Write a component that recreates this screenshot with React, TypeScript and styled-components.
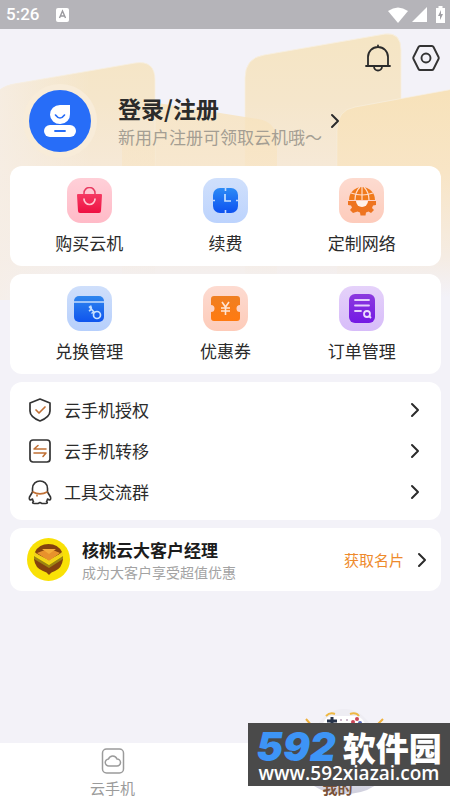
import React from 'react';
import styled, { createGlobalStyle } from 'styled-components';

const GlobalStyle = createGlobalStyle`
  * { box-sizing: border-box; }
  body {
    margin: 0;
    background: #f3f2f8;
    color: #2b2b2b;
    font-family: 'Noto Sans CJK SC', 'Noto Sans', sans-serif;
  }
  button {
    border: 0;
    padding: 0;
    background: none;
    color: inherit;
    font: inherit;
    cursor: pointer;
  }
  svg { display: block; flex: none; }
`;

const Page = styled.div`
  position: relative;
  isolation: isolate;
  display: flex;
  flex-direction: column;
  min-height: 100vh;
  overflow: hidden;
`;

const Backdrop = styled.svg`
  position: absolute;
  z-index: -1;
  top: 0;
  left: 0;
  width: 100%;
`;

const StatusBar = styled.header`
  display: flex;
  align-items: center;
  height: 29px;
  padding: 0 5px 0 6px;
  background: #b5b4b9;
  color: #fff;
`;

const Clock = styled.time`
  margin-right: 17px;
  font: 500 17px/29px Roboto, sans-serif;
`;

const StatusIcons = styled.div`
  display: flex;
  align-items: center;
  gap: 4px;
  margin-left: auto;
`;

const TopBar = styled.div`
  display: flex;
  justify-content: flex-end;
  gap: 18px;
  height: 55px;
  padding: 14px 9px 0;
`;

const IconButton = styled.button`
  display: grid;
  place-items: center;
  width: 30px;
  height: 30px;
`;

const Profile = styled.button`
  display: flex;
  align-items: center;
  align-self: flex-start;
  margin: 0 23px 8px;
  text-align: left;
`;

const Avatar = styled.span`
  display: grid;
  place-items: center;
  width: 74px;
  height: 74px;
  margin-right: 21px;
  border-radius: 50%;
  background: #f8ecd9;
`;

const ProfileText = styled.span`
  display: flex;
  flex-direction: column;
  margin-right: 8px;
`;

const ProfileName = styled.strong`
  font-size: 23px;
  line-height: 32px;
  font-weight: 700;
`;

const ProfileHint = styled.span`
  color: #a49e93;
  font-size: 17px;
  line-height: 26px;
`;

const Main = styled.main`
  display: flex;
  flex: 1;
  flex-direction: column;
  gap: 8px;
  padding: 0 9px 16px 10px;
`;

const Card = styled.section`
  border-radius: 12px;
  background: #fff;
`;

const TileCard = styled(Card)`
  display: grid;
  grid-template-columns: repeat(3, 1fr);
  padding: 12px 11px 11px;
`;

const Tile = styled.button`
  display: flex;
  flex-direction: column;
  align-items: center;
  gap: 8px;
  font-size: 17px;
  line-height: 24px;
`;

const TileIcon = styled.span<{ $from: string; $to: string }>`
  display: grid;
  place-items: center;
  width: 45px;
  height: 45px;
  border-radius: 14px;
  background: linear-gradient(${p => p.$from}, ${p => p.$to});
`;

const ListCard = styled(Card)`
  display: flex;
  flex-direction: column;
  padding: 7px 0 8px;
`;

const ListRow = styled.button`
  display: flex;
  align-items: center;
  gap: 12px;
  height: 41px;
  padding: 0 21px 0 18px;
  font-size: 17px;
  text-align: left;
`;

const RowLabel = styled.span`
  flex: 1;
`;

const ManagerCard = styled(Card)`
  display: flex;
  align-items: center;
  height: 63px;
  padding: 0 14px 0 17px;
`;

const ManagerText = styled.div`
  display: flex;
  flex: 1;
  flex-direction: column;
  margin-left: 12px;
`;

const ManagerName = styled.h2`
  margin: 0;
  color: #1c1c1c;
  font-size: 17px;
  line-height: 24px;
  font-weight: 700;
`;

const ManagerHint = styled.p`
  margin: 0;
  color: #a3a3a3;
  font-size: 14px;
  line-height: 20px;
`;

const CardLink = styled.a`
  display: flex;
  align-items: center;
  gap: 13px;
  color: #ee8a2c;
  font-size: 15px;
  text-decoration: none;
`;

const TabBar = styled.nav`
  display: grid;
  grid-template-columns: repeat(2, 1fr);
  height: 57px;
  background: #fff;
`;

const Tab = styled.button<{ $active?: boolean }>`
  position: relative;
  display: flex;
  flex-direction: column;
  align-items: center;
  justify-content: flex-end;
  gap: 3px;
  padding-bottom: 1px;
  color: ${p => (p.$active ? '#7a5238' : '#9b9b9b')};
  font-size: 15px;
  font-weight: ${p => (p.$active ? 700 : 400)};
  line-height: 22px;
`;

const TabLabel = styled.span`
  position: relative;
`;

const Mascot = styled.svg`
  position: absolute;
  bottom: 4px;
  left: 50%;
  margin-left: -42px;
`;

const Watermark = styled.aside`
  position: absolute;
  right: 0;
  bottom: 14px;
  display: flex;
  flex-direction: column;
  align-items: center;
  width: 202px;
  height: 63px;
  background: #4a4a4a;
  color: #fff;
`;

const WatermarkTitle = styled.div`
  display: flex;
  align-items: center;
  gap: 7px;
  height: 41px;
  padding-top: 7px;
`;

const WatermarkNumber = styled.span`
  color: #3d94f6;
  font: italic 900 40px/34px Inter, sans-serif;
`;

const WatermarkName = styled.span`
  font-size: 33px;
  line-height: 34px;
  font-weight: 900;
`;

const WatermarkSite = styled.span`
  font: 600 19px/18px 'Open Sans', sans-serif;
`;

const Chevron = () => (
  <svg width="10" height="16" viewBox="0 0 10 16" fill="none" stroke="#2b2b2b" strokeWidth="2" strokeLinecap="round" strokeLinejoin="round">
    <path d="M2 2l6 6-6 6" />
  </svg>
);

const PageBackdrop = () => (
  <Backdrop viewBox="0 0 450 300" aria-hidden="true">
    <defs>
      <linearGradient id="pale" gradientUnits="userSpaceOnUse" x1="0" y1="35" x2="0" y2="298">
        <stop offset="0" stopColor="#f5e5c4" />
        <stop offset="0.25" stopColor="#f5e6cb" />
        <stop offset="0.5" stopColor="#f6e9d7" />
        <stop offset="0.85" stopColor="#f4ede9" />
        <stop offset="1" stopColor="#f3f2f8" />
      </linearGradient>
      <linearGradient id="warm" gradientUnits="userSpaceOnUse" x1="0" y1="90" x2="0" y2="298">
        <stop offset="0" stopColor="#f7e2ba" />
        <stop offset="0.4" stopColor="#f8e5c6" />
        <stop offset="0.8" stopColor="#f5ece3" />
        <stop offset="1" stopColor="#f3f2f8" />
      </linearGradient>
      <linearGradient id="left" x1="0" x2="1">
        <stop offset="0" stopColor="#f6eee6" stopOpacity="0.8" />
        <stop offset="1" stopColor="#f6eee6" stopOpacity="0" />
      </linearGradient>
      <linearGradient id="rim" gradientUnits="userSpaceOnUse" x1="0" y1="35" x2="0" y2="240">
        <stop offset="0" stopColor="#f7efe0" />
        <stop offset="1" stopColor="#f7efe0" stopOpacity="0" />
      </linearGradient>
    </defs>
    <path d="M245 310V78Q245 58 264 55L385 34Q401 32 401 50V310Z" fill="url(#pale)" stroke="url(#rim)" />
    <path d="M122 310V117Q122 98 145 101L258 119Q277 122 277 142V310Z" fill="url(#warm)" opacity="0.8" />
    <path d="M337 310V130Q337 110 355 107L470 86V310Z" fill="url(#warm)" stroke="url(#rim)" />
    <path d="M-10 310V100Q0 86 14 84L135 63Q155 60 155 80V310Z" fill="url(#pale)" stroke="url(#rim)" />
    <path d="M122 310V140H155V310Z" fill="url(#warm)" opacity="0.6" />
    <path d="M0 90Q6 85 14 84L90 71V310H0Z" fill="url(#left)" />
  </Backdrop>
);

const BagIcon = () => (
  <svg width="27" height="27" viewBox="0 0 27 27" fill="none">
    <defs><linearGradient id="bag" x2="0" y2="1"><stop stopColor="#f53a62" /><stop offset="1" stopColor="#ee1042" /></linearGradient></defs>
    <path d="M8 9V6a5 5 0 0 1 11 0v3" stroke="#e83a60" strokeWidth="1.5" />
    <path d="M2 7h23q1 0 1 1l-1 16q0 2-2 2H4q-2 0-2-2L1 8q0-1 1-1z" fill="url(#bag)" />
    <path d="M8 12a5.5 5.5 0 0 0 11 0" stroke="#ffc7d2" strokeWidth="1.7" strokeLinecap="round" />
  </svg>
);

const ClockIcon = () => (
  <svg width="27" height="27" viewBox="0 0 27 27" fill="none">
    <defs><linearGradient id="clk" x2="0" y2="1"><stop stopColor="#2c8bf6" /><stop offset="1" stopColor="#0d51f0" /></linearGradient></defs>
    <rect x="1" y="1" width="25" height="25" rx="7" fill="url(#clk)" />
    <path d="M13.5 0v4M13.5 23v4M0 13.5h3M24 13.5h3" stroke="#c6dafd" strokeWidth="1.6" />
    <path d="M13 7v7h6" stroke="#c6e0ff" strokeWidth="1.7" />
  </svg>
);

const GlobeIcon = () => (
  <svg width="30" height="30" viewBox="0 0 30 30" fill="none">
    <path d="M2 14A13 13 0 0 1 28 14Z" fill="#f07a1b" />
    <path d="M15 1v13M8 14Q8 6 13 1M22 14Q22 6 17 1M4 7q11 4 22 0" stroke="#ffdccb" strokeWidth="1.2" />
    <path d="M1 15h28v4l-3 .5-1 2.500 2 2-3 3-2.500-1.500-2.500 1-.5 3h-5l-.5-3-2.500-1L6 27l-3-3 2-2.500-1-2L1 19z" fill="#ee7420" />
    <path d="M9 15h12a6 6 0 0 1-12 0z" fill="#fff1e9" />
  </svg>
);

const KeyCardIcon = () => (
  <svg width="30" height="27" viewBox="0 0 30 27" fill="none">
    <defs><linearGradient id="keyc" x2="0" y2="1"><stop stopColor="#2f86ee" /><stop offset="1" stopColor="#0f54ee" /></linearGradient></defs>
    <rect y="1" width="30" height="26" rx="5" fill="url(#keyc)" />
    <path d="M0 7h30" stroke="#c6dcfb" strokeWidth="1.5" />
    <circle cx="23" cy="20" r="3.5" stroke="#c9e2ff" strokeWidth="1.7" />
    <path d="M20.5 17.5L15 11.500M15 16l3-2M17.500 18.500l2.500-2M16.500 10.500l1 3" stroke="#c9e2ff" strokeWidth="1.6" />
  </svg>
);

const CouponIcon = () => (
  <svg width="31" height="25" viewBox="0 0 31 25" fill="none">
    <defs><linearGradient id="cpn" x2="0" y2="1"><stop stopColor="#ef7f22" /><stop offset="1" stopColor="#ff7a10" /></linearGradient></defs>
    <path d="M4 0h23q3 0 3 3v6a3.500 3.500 0 0 0 0 7v6q0 3-3 3H4q-3 0-3-3v-6a3.500 3.500 0 0 0 0-7V3q0-3 3-3z" fill="url(#cpn)" />
    <path d="M12 6l3.500 5L19 6M15.500 11v8M11 12h9M11 15h9" stroke="#ffe5d4" strokeWidth="1.6" />
  </svg>
);

const OrderIcon = () => (
  <svg width="26" height="29" viewBox="0 0 26 29" fill="none">
    <defs><linearGradient id="ord" x2="0" y2="1"><stop stopColor="#8b3ade" /><stop offset="1" stopColor="#7418e4" /></linearGradient></defs>
    <rect width="26" height="29" rx="6" fill="url(#ord)" />
    <path d="M6 6h14M6 11.500h14M6 17h6" stroke="#e5cffc" strokeWidth="1.8" strokeLinecap="round" />
    <circle cx="18" cy="20" r="3" stroke="#ecdcff" strokeWidth="1.8" />
    <path d="M20 22l2 2" stroke="#ecdcff" strokeWidth="1.8" />
  </svg>
);

const ShieldIcon = () => (
  <svg width="24" height="26" viewBox="0 0 24 26" fill="none" strokeLinecap="round" strokeLinejoin="round">
    <path d="M12 2l10 4v8c0 5-5 8-10 10C7 22 2 19 2 14V6z" stroke="#333" strokeWidth="1.7" />
    <path d="M8 13l3 3 6-6" stroke="#c07035" strokeWidth="1.7" />
  </svg>
);

const TransferIcon = () => (
  <svg width="24" height="26" viewBox="0 0 24 26" fill="none" strokeLinecap="round" strokeLinejoin="round">
    <rect x="2" y="2" width="20" height="22" rx="3" stroke="#333" strokeWidth="1.7" />
    <path d="M18 11H6l4-3.500M6 15h12l-3 3.500" stroke="#c07035" strokeWidth="1.6" />
  </svg>
);

const PenguinIcon = () => (
  <svg width="24" height="26" viewBox="0 0 24 26" fill="none" strokeLinecap="round" strokeLinejoin="round">
    <path d="M4.500 13V9.500c0-10 15-10 15 0V13l3 5c.5 2 0 3-1 3l-2-1c0 1-.5 1.500-1 2.500 1.500 1 1 2-1 2h-3.500l-2-1-2 1H6.500c-2 0-2.500-1-1-2-.5-1-1-1.500-1-2.500l-2 1c-1 0-1.500-1-1-3z" stroke="#333" strokeWidth="1.6" />
    <path d="M5 13c4 2.500 10 2.500 14 0M9 14.500V17" stroke="#c07035" strokeWidth="1.6" />
  </svg>
);

const WalnutLogo = () => (
  <svg width="43" height="43" viewBox="0 0 43 43">
    <circle cx="21.5" cy="21.5" r="21.5" fill="#f9e106" />
    <path d="M8 14Q12 6 21.500 6T35 14L33 16 22 22 9 16z" fill="#84420f" />
    <path d="M10 15l8-3h8l7 3-11 8z" fill="#e8922c" />
    <path d="M15 11h14l-7 5z" fill="#f4ad3a" />
    <path d="M7 18l15 9 14-9v4l-14 9-15-9z" fill="#9c8413" />
    <path d="M7 14l15 9 14-9v3l-14 9-15-9z" fill="#f0d11c" />
    <path d="M7 21l15 9 14-9q-1 9-8 12-4 1-6 4-2-3-6-4-8-3-9-12z" fill="#84420f" />
  </svg>
);

const tiles = [
  [
    { label: '购买云机', from: '#ffd0d8', to: '#ffbac7', icon: <BagIcon /> },
    { label: '续费', from: '#d0e0fc', to: '#bcd3fd', icon: <ClockIcon /> },
    { label: '定制网络', from: '#fddbd0', to: '#fdcbbb', icon: <GlobeIcon /> },
  ],
  [
    { label: '兑换管理', from: '#cfdffb', to: '#b6cffc', icon: <KeyCardIcon /> },
    { label: '优惠券', from: '#fddbd1', to: '#fdcbb9', icon: <CouponIcon /> },
    { label: '订单管理', from: '#e5d2fa', to: '#d7bcf9', icon: <OrderIcon /> },
  ],
];

const rows = [
  { label: '云手机授权', icon: <ShieldIcon /> },
  { label: '云手机转移', icon: <TransferIcon /> },
  { label: '工具交流群', icon: <PenguinIcon /> },
];

export default function App() {
  return (
    <Page>
      <GlobalStyle />
      <PageBackdrop />
      <StatusBar>
        <Clock>5:26</Clock>
        <svg width="13" height="14" viewBox="0 0 13 14" fill="none">
          <rect width="13" height="14" rx="2" fill="#fff" />
          <path d="M3.500 10L6.500 3l3 7M4.500 8h4" stroke="#9b9a9f" strokeWidth="1.4" />
        </svg>
        <StatusIcons>
          <svg width="20" height="16" viewBox="0 0 20 16"><path d="M0 4Q10-3 20 4L10 16z" fill="#fff" /></svg>
          <svg width="15" height="15" viewBox="0 0 15 15"><path d="M15 0v15H0z" fill="#fff" /></svg>
          <svg width="14" height="17" viewBox="4 0 14 17">
            <path d="M9 2h2.500V0h4v2H18v15H9z" fill="#fff" />
            <path d="M14 4l-3 6h2v4l3-6h-2z" fill="#a09fa4" />
          </svg>
        </StatusIcons>
      </StatusBar>
      <TopBar>
        <IconButton aria-label="消息">
          <svg width="28" height="28" viewBox="0 0 28 28" fill="none" stroke="#2b2b2b" strokeWidth="1.8" strokeLinecap="round">
            <path d="M4 22V13a10 10 0 0 1 20 0v9M2 22h24M14 1.500V3M10 22.500a4 4 0 0 0 8 0" />
          </svg>
        </IconButton>
        <IconButton aria-label="设置">
          <svg width="28" height="28" viewBox="0 0 28 28" fill="none" stroke="#333" strokeWidth="1.9" strokeLinejoin="round">
            <path d="M8 2h12q1 0 1.500 1l5 10q.5 1 0 2l-5 10q-.5 1-1.500 1H8q-1 0-1.500-1l-5-10q-.5-1 0-2l5-10Q7 2 8 2z" />
            <circle cx="14" cy="14" r="4.5" />
          </svg>
        </IconButton>
      </TopBar>
      <Profile>
        <Avatar>
          <svg width="62" height="62" viewBox="0 0 62 62" fill="none">
            <circle cx="31" cy="31" r="31" fill="#276df8" />
            <path d="M31 15h10v9a10 9.500 0 1 1-10-9z" fill="#fff" />
            <path d="M26.500 25q4.500 6 9 0" stroke="#276df8" strokeWidth="1.6" strokeLinecap="round" />
            <rect x="15" y="35" width="32" height="12" rx="6" fill="#fff" />
            <path d="M26 41h10" stroke="#276df8" strokeWidth="1.8" strokeLinecap="round" />
          </svg>
        </Avatar>
        <ProfileText>
          <ProfileName>登录/注册</ProfileName>
          <ProfileHint>新用户注册可领取云机哦～</ProfileHint>
        </ProfileText>
        <Chevron />
      </Profile>
      <Main>
        {tiles.map((group, i) => (
          <TileCard key={i}>
            {group.map(t => (
              <Tile key={t.label}>
                <TileIcon $from={t.from} $to={t.to}>{t.icon}</TileIcon>
                {t.label}
              </Tile>
            ))}
          </TileCard>
        ))}
        <ListCard>
          {rows.map(r => (
            <ListRow key={r.label}>
              {r.icon}
              <RowLabel>{r.label}</RowLabel>
              <Chevron />
            </ListRow>
          ))}
        </ListCard>
        <ManagerCard>
          <WalnutLogo />
          <ManagerText>
            <ManagerName>核桃云大客户经理</ManagerName>
            <ManagerHint>成为大客户享受超值优惠</ManagerHint>
          </ManagerText>
          <CardLink href="#card">获取名片<Chevron /></CardLink>
        </ManagerCard>
      </Main>
      <TabBar>
        <Tab>
          <svg width="24" height="26" viewBox="0 0 24 26" fill="none" stroke="#9b9b9b" strokeWidth="1.5">
            <rect x="1.5" y="1" width="21" height="24" rx="4" />
            <path d="M8 18a3.500 3.500 0 0 1-.5-7 4.500 4.500 0 0 1 8.500 0 3.500 3.500 0 0 1 0 7z" />
          </svg>
          <TabLabel>云手机</TabLabel>
        </Tab>
        <Tab $active>
          <Mascot width="100" height="90" viewBox="0 0 100 90" fill="none">
            <defs><linearGradient id="ball" x2="0" y2="1"><stop stopColor="#f1f0f5" /><stop offset="1" stopColor="#cfcfdd" /></linearGradient></defs>
            <path d="M0 50H98Q88 88 48 88T0 50z" fill="url(#ball)" />
            <path d="M21 20Q31 3 48 3t27 17z" fill="#eeedf3" />
            <path d="M10 13l6 7M9 19l6 2M87 13l-7 7M88 19l-6 1" stroke="#eeb03c" strokeWidth="2" />
            <path d="M30 10q4-4 9-2M54 8q6-2 9 2" stroke="#eeb842" strokeWidth="2" />
            <path d="M26 22q2-12 10-12h22q10 0 12 12z" fill="#fff" />
            <path d="M31 15h10M36 11v9" stroke="#26334a" strokeWidth="3" />
            <path d="M44 14h2M50 14h2" stroke="#b9a0b8" strokeWidth="1.5" />
            <circle cx="57" cy="16" r="2" fill="#cc4658" />
            <circle cx="61" cy="13" r="2" fill="#cc4658" />
            <circle cx="64" cy="17" r="2" fill="#5668b8" />
          </Mascot>
          <TabLabel>我的</TabLabel>
        </Tab>
      </TabBar>
      <Watermark>
        <WatermarkTitle>
          <WatermarkNumber>592</WatermarkNumber>
          <WatermarkName>软件园</WatermarkName>
        </WatermarkTitle>
        <WatermarkSite>www.592xiazai.com</WatermarkSite>
      </Watermark>
    </Page>
  );
}
